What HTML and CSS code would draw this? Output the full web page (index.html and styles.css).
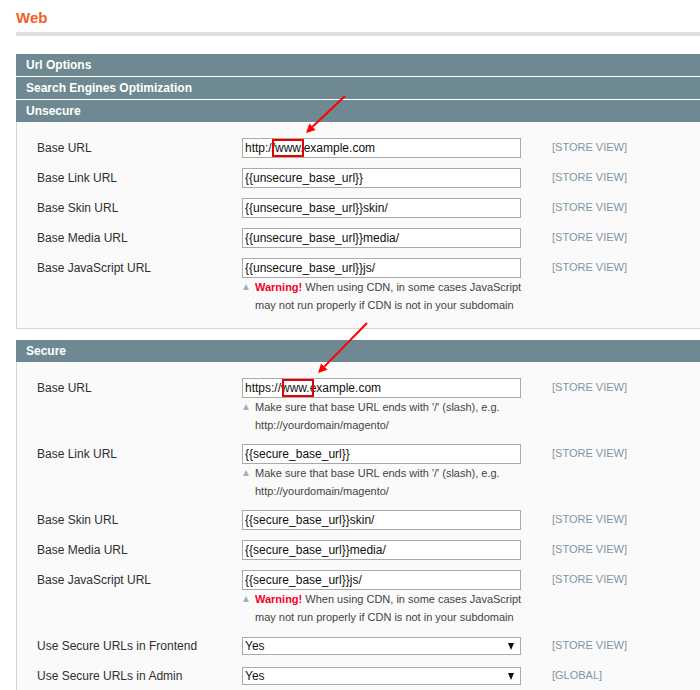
FILE: index.html
```html
<!DOCTYPE html>
<html>
<head>
<meta charset="utf-8">
<link rel="stylesheet" href="styles.css">
</head>
<body>
<div class="page">
  <div class="main">
    <div class="content-header"><h3 class="page-title">Web</h3></div>

    <div class="section-head">Url Options</div>
    <div class="section-head">Search Engines Optimization</div>
    <div class="section-head">Unsecure</div>
    <div class="fieldset">
      <div class="row">
        <div class="label">Base URL</div>
        <div class="value"><span class="field"><input class="input" type="text" value="http://www.example.com"><span class="mark mark-1"></span></span></div>
        <div class="scope">[STORE VIEW]</div>
      </div>
      <div class="row">
        <div class="label">Base Link URL</div>
        <div class="value"><input class="input" type="text" value="{{unsecure_base_url}}"></div>
        <div class="scope">[STORE VIEW]</div>
      </div>
      <div class="row">
        <div class="label">Base Skin URL</div>
        <div class="value"><input class="input" type="text" value="{{unsecure_base_url}}skin/"></div>
        <div class="scope">[STORE VIEW]</div>
      </div>
      <div class="row">
        <div class="label">Base Media URL</div>
        <div class="value"><input class="input" type="text" value="{{unsecure_base_url}}media/"></div>
        <div class="scope">[STORE VIEW]</div>
      </div>
      <div class="row">
        <div class="label">Base JavaScript URL</div>
        <div class="value">
          <input class="input" type="text" value="{{unsecure_base_url}}js/">
          <div class="note"><span class="tri"></span><div class="note-text"><div><strong class="warn">Warning!</strong> When using CDN, in some cases JavaScript</div><div>may not run properly if CDN is not in your subdomain</div></div></div>
        </div>
        <div class="scope">[STORE VIEW]</div>
      </div>
    </div>

    <div class="section-head">Secure</div>
    <div class="fieldset">
      <div class="row">
        <div class="label">Base URL</div>
        <div class="value">
          <span class="field"><input class="input" type="text" value="https://www.example.com"><span class="mark mark-2"></span></span>
          <div class="note"><span class="tri"></span><div class="note-text"><div>Make sure that base URL ends with '/' (slash), e.g.</div><div>http://yourdomain/magento/</div></div></div>
        </div>
        <div class="scope">[STORE VIEW]</div>
      </div>
      <div class="row">
        <div class="label">Base Link URL</div>
        <div class="value">
          <input class="input" type="text" value="{{secure_base_url}}">
          <div class="note"><span class="tri"></span><div class="note-text"><div>Make sure that base URL ends with '/' (slash), e.g.</div><div>http://yourdomain/magento/</div></div></div>
        </div>
        <div class="scope">[STORE VIEW]</div>
      </div>
      <div class="row">
        <div class="label">Base Skin URL</div>
        <div class="value"><input class="input" type="text" value="{{secure_base_url}}skin/"></div>
        <div class="scope">[STORE VIEW]</div>
      </div>
      <div class="row">
        <div class="label">Base Media URL</div>
        <div class="value"><input class="input" type="text" value="{{secure_base_url}}media/"></div>
        <div class="scope">[STORE VIEW]</div>
      </div>
      <div class="row">
        <div class="label">Base JavaScript URL</div>
        <div class="value">
          <input class="input" type="text" value="{{secure_base_url}}js/">
          <div class="note"><span class="tri"></span><div class="note-text"><div><strong class="warn">Warning!</strong> When using CDN, in some cases JavaScript</div><div>may not run properly if CDN is not in your subdomain</div></div></div>
        </div>
        <div class="scope">[STORE VIEW]</div>
      </div>
      <div class="row">
        <div class="label">Use Secure URLs in Frontend</div>
        <div class="value"><span class="select-wrap"><select class="select"><option>Yes</option><option>No</option></select></span></div>
        <div class="scope">[STORE VIEW]</div>
      </div>
      <div class="row">
        <div class="label">Use Secure URLs in Admin</div>
        <div class="value"><span class="select-wrap"><select class="select"><option>Yes</option><option>No</option></select></span></div>
        <div class="scope">[GLOBAL]</div>
      </div>
    </div>
  </div>

  <svg class="annot" width="700" height="690" viewBox="0 0 700 690">
    <line x1="345" y1="96" x2="312.5" y2="126.8" stroke="#f00" stroke-width="2"/>
    <polygon points="306,133 315.6,130.1 309.4,123.6" fill="#f00"/>
    <line x1="367" y1="323" x2="324.3" y2="366.6" stroke="#f00" stroke-width="2"/>
    <polygon points="318,373 327.5,369.7 321.1,363.4" fill="#f00"/>
  </svg>
</div>
</body>
</html>
```

FILE: styles.css
```css
html, body {
  margin: 0;
  padding: 0;
  background: #fff;
  overflow: hidden;
}

.page {
  position: relative;
  width: 700px;
  height: 690px;
  overflow: hidden;
  font-family: "Liberation Sans", Arial, sans-serif;
  color: #2f2f2f;
}

.main {
  margin-left: 16px;
  width: 700px;
}

.content-header {
  padding: 9px 0 5px;
  border-bottom: 4px solid #dfdfdf;
  margin-bottom: 18px;
}

.page-title {
  margin: 0;
  font-size: 15px;
  line-height: 18px;
  font-weight: bold;
  color: #f0601f;
}

.section-head {
  height: 22px;
  line-height: 22px;
  background: #6f8992;
  color: #fff;
  font-size: 12px;
  font-weight: bold;
  padding-left: 10px;
  margin-bottom: 1px;
}

.section-head + .fieldset {
  margin-top: -1px;
}

.fieldset {
  background: #fafafa;
  border: 1px solid #d6d6d6;
  border-top: 0;
  padding: 16px 0 4px 20px;
  margin-bottom: 11px;
}

.row {
  display: grid;
  grid-template-columns: 205px 279px auto;
  align-items: start;
  padding-bottom: 10px;
}

.label {
  font-size: 12px;
  line-height: 20px;
  color: #2f2f2f;
}

.scope {
  font-size: 11px;
  line-height: 19px;
  color: #7c96a7;
  padding-left: 31px;
}

.value {
  display: flex;
  flex-direction: column;
}

.field {
  position: relative;
  display: block;
}

.input {
  display: block;
  box-sizing: border-box;
  width: 279px;
  height: 20px;
  margin: 0;
  padding: 0 2px;
  border: 1px solid #aaa;
  background: #fff;
  font-family: "Liberation Sans", Arial, sans-serif;
  font-size: 12px;
  color: #111;
  outline: none;
}

.mark {
  position: absolute;
  top: 1px;
  width: 32px;
  height: 18px;
  box-sizing: border-box;
  border: 2px solid #e60000;
}

.mark-1 { left: 30px; }
.mark-2 { left: 40px; }

.note {
  display: flex;
  align-items: flex-start;
  padding-left: 1px;
  font-size: 11px;
  line-height: 18px;
  color: #444;
}

.tri {
  flex: none;
  width: 0;
  height: 0;
  margin: 6px 6px 0 0;
  border-left: 3.5px solid transparent;
  border-right: 3.5px solid transparent;
  border-bottom: 6px solid #a3b0b6;
}

.note-text {
  white-space: nowrap;
}

.warn {
  color: #f0002a;
}

.select-wrap {
  position: relative;
  display: block;
  margin-top: 1px;
}

.select {
  display: block;
  box-sizing: border-box;
  width: 279px;
  height: 18px;
  margin: 0;
  padding: 0 2px;
  border: 1px solid #aaa;
  border-radius: 0;
  background: #fff;
  -webkit-appearance: none;
  appearance: none;
  font-family: "Liberation Sans", Arial, sans-serif;
  font-size: 12px;
  color: #111;
  outline: none;
}

.select-wrap::after {
  content: "";
  position: absolute;
  right: 7px;
  top: 6px;
  border-left: 3.5px solid transparent;
  border-right: 3.5px solid transparent;
  border-top: 7px solid #111;
  pointer-events: none;
}

.annot {
  position: absolute;
  left: 0;
  top: 0;
  pointer-events: none;
}
```
